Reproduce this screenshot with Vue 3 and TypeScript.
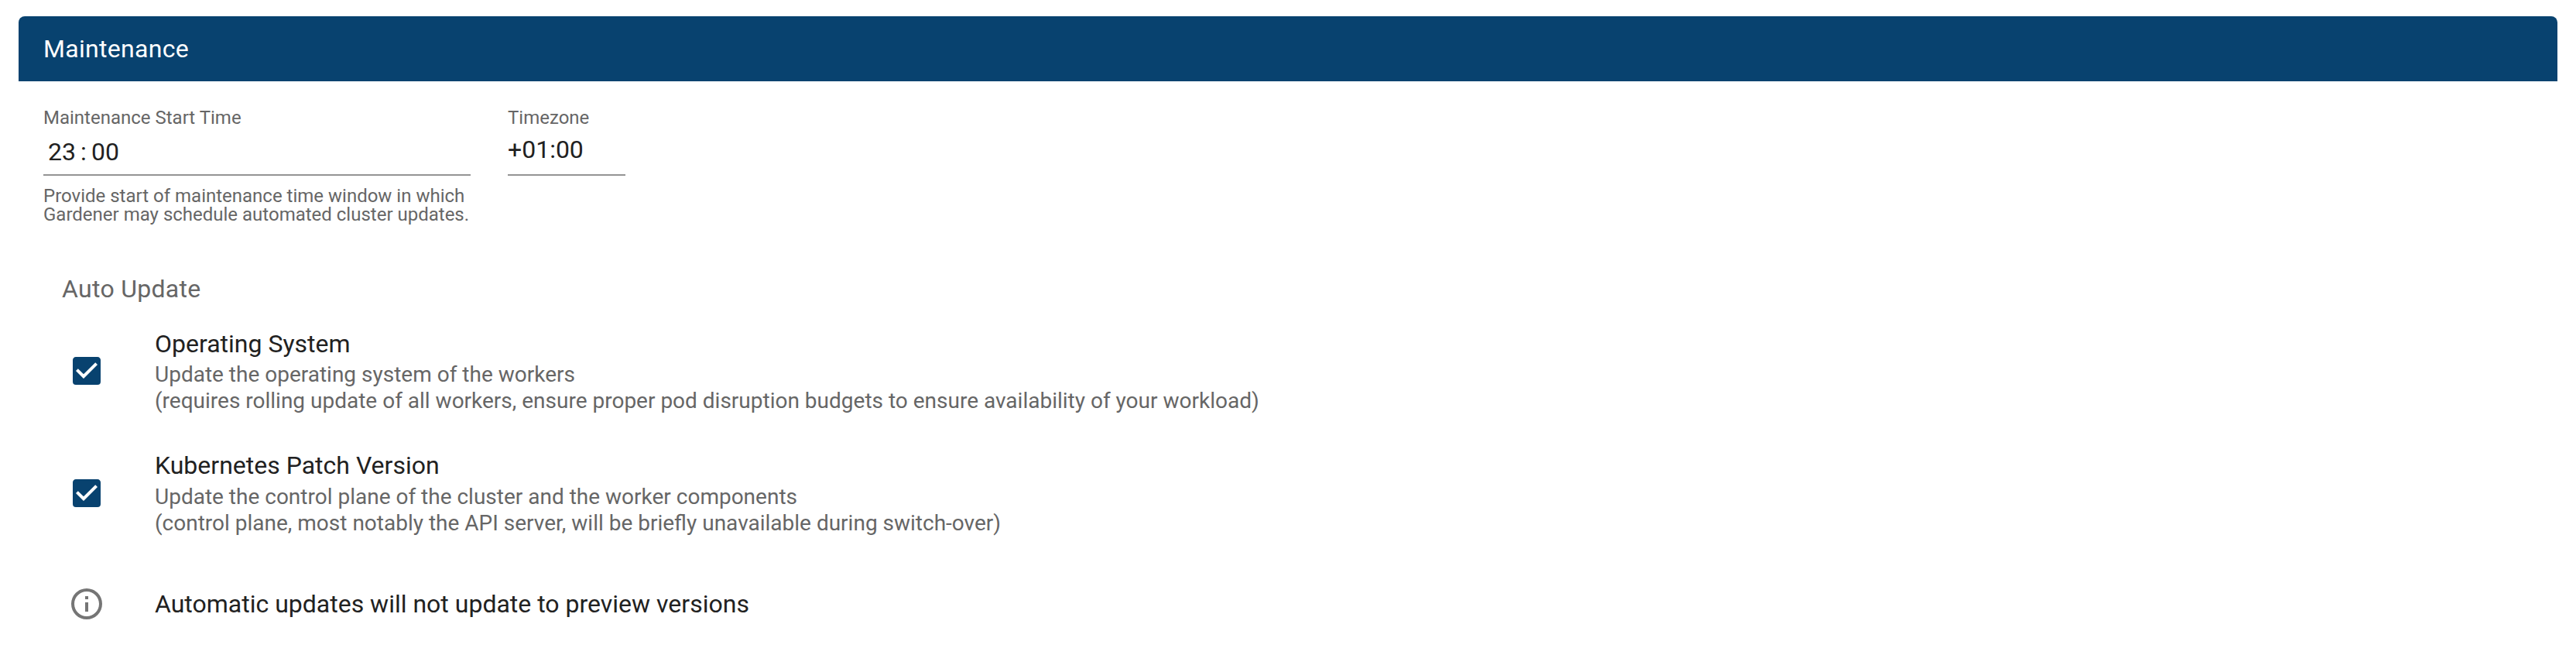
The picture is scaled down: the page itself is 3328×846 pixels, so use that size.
<script setup lang="ts">
import { ref } from 'vue'

interface UpdateOption {
  title: string
  lines: string[]
  checked: boolean
}

const options = ref<UpdateOption[]>([
  {
    title: 'Operating System',
    lines: [
      'Update the operating system of the workers',
      '(requires rolling update of all workers, ensure proper pod disruption budgets to ensure availability of your workload)',
    ],
    checked: true,
  },
  {
    title: 'Kubernetes Patch Version',
    lines: [
      'Update the control plane of the cluster and the worker components',
      '(control plane, most notably the API server, will be briefly unavailable during switch-over)',
    ],
    checked: true,
  },
])
</script>

<template>
  <section class="card">
    <header class="card-header">Maintenance</header>
    <div class="fields">
      <div class="field time-field">
        <label class="label">Maintenance Start Time</label>
        <div class="value time-value"><span>23</span><span class="colon">:</span><span>00</span></div>
        <p class="hint">Provide start of maintenance time window in which<br />Gardener may schedule automated cluster updates.</p>
      </div>
      <div class="field zone-field">
        <label class="label">Timezone</label>
        <div class="value">+01:00</div>
      </div>
    </div>
    <h2 class="subheader">Auto Update</h2>
    <div v-for="option in options" :key="option.title" class="option">
      <svg class="icon check" viewBox="0 0 24 24" role="checkbox" :aria-checked="option.checked" @click="option.checked = !option.checked">
        <path v-if="option.checked" d="M10,17L5,12L6.41,10.58L10,14.17L17.59,6.58L19,8M19,3H5C3.89,3 3,3.89 3,5V19A2,2 0 0,0 5,21H19A2,2 0 0,0 21,19V5C21,3.89 20.1,3 19,3Z" />
        <path v-else d="M19,3H5C3.89,3 3,3.89 3,5V19A2,2 0 0,0 5,21H19A2,2 0 0,0 21,19V5C21,3.89 20.1,3 19,3M19,5V19H5V5H19Z" />
      </svg>
      <div class="content">
        <div class="title">{{ option.title }}</div>
        <div v-for="line in option.lines" :key="line" class="description">{{ line }}</div>
      </div>
    </div>
    <div class="notice">
      <svg class="icon info" viewBox="0 0 24 24">
        <path d="M11,9H13V7H11M12,20C7.59,20 4,16.41 4,12C4,7.59 7.59,4 12,4C16.41,4 20,7.59 20,12C20,16.41 16.41,20 12,20M12,2A10,10 0 0,0 2,12A10,10 0 0,0 12,22A10,10 0 0,0 22,12A10,10 0 0,0 12,2M11,17H13V11H11V17Z" />
      </svg>
      <div class="title">Automatic updates will not update to preview versions</div>
    </div>
  </section>
</template>

<style>
html,
body {
  background: #fff;
}
</style>

<style scoped>
.card {
  box-sizing: border-box;
  height: 846px;
  padding: 21px 24px 0;
  font-family: Roboto, "Liberation Sans", sans-serif;
  font-size: 32px;
  color: #212121;
}
.card-header {
  box-sizing: border-box;
  height: 84px;
  padding: 0 32px;
  border-radius: 8px 8px 0 0;
  background: #08426f;
  color: #fff;
  line-height: 84px;
  letter-spacing: 0.3px;
}
.fields {
  display: flex;
  gap: 48px;
  height: 204px;
  padding: 32px 32px 0;
}
.time-field {
  width: 552px;
}
.zone-field {
  width: 152px;
}
.label {
  display: block;
  font-size: 24px;
  line-height: 30px;
  color: #666;
}
.value {
  box-sizing: border-box;
  height: 60px;
  border-bottom: 2px solid #949494;
  line-height: 52px;
}
.time-value {
  display: flex;
  padding: 3px 0 0 6px;
}
.colon {
  width: 20px;
  text-align: center;
}
.hint {
  margin: 14px 0 0;
  font-size: 24px;
  line-height: 24px;
  color: #666;
  white-space: nowrap;
}
.subheader {
  margin: 0;
  padding: 12px 0 0 56px;
  font-size: 32px;
  font-weight: 400;
  line-height: 40px;
  letter-spacing: 0.3px;
  color: #666;
}
.option {
  display: flex;
  gap: 64px;
  height: 157.4px;
  padding-left: 64px;
}
.subheader + .option {
  margin-top: 31px;
}
.icon {
  flex: none;
  width: 48px;
  height: 48px;
}
.check {
  margin-top: 31.2px;
  fill: #08426f;
  cursor: pointer;
}
.title {
  line-height: 40px;
}
.content .title {
  margin-bottom: 3.2px;
}
.description {
  font-size: 28px;
  line-height: 34px;
  color: #666;
  white-space: nowrap;
}
.notice {
  display: flex;
  align-items: center;
  gap: 64px;
  height: 48px;
  margin-top: 17.2px;
  padding-left: 64px;
}
.info {
  fill: #757575;
}
</style>
